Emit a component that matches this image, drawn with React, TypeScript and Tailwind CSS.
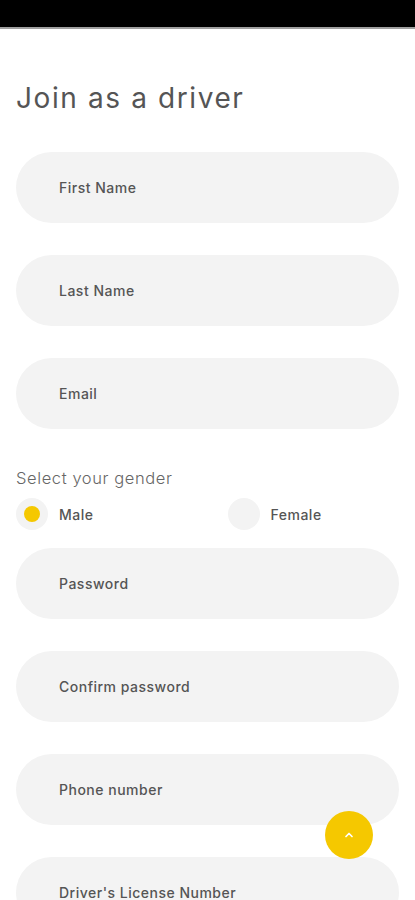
import React, { useState } from 'react'

const fields = ['First Name', 'Last Name', 'Email']
const moreFields = ['Password', 'Confirm password', 'Phone number', "Driver's License Number"]

const Field = ({ label, className = '' }: { label: string; className?: string }) => (
  <div className={`h-[71px] w-full rounded-full bg-[#f3f3f3] flex items-center pl-[43px] ${className}`}>
    <span className="text-[14px] font-medium tracking-[0.5px] text-[#555555]">{label}</span>
  </div>
)

const Radio = ({ label, checked, onClick }: { label: string; checked: boolean; onClick: () => void }) => (
  <button onClick={onClick} className="flex items-center gap-[11px] text-left">
    <span className="h-8 w-8 rounded-full bg-[#f3f3f3] flex items-center justify-center">
      {checked && <span className="h-4 w-4 rounded-full bg-[#f5c800]" />}
    </span>
    <span className="text-[14px] font-medium tracking-[0.5px] text-[#555555]">{label}</span>
  </button>
)

export default function App() {
  const [gender, setGender] = useState('male')

  return (
    <div className="relative h-[900px] w-full overflow-hidden bg-white" style={{ fontFamily: 'Inter, "Noto Sans", sans-serif' }}>
      {/* status bar */}
      <div className="h-[29px] bg-black border-b-2 border-[#a0a0a0]" />

      <div className="px-4">
        <h1 className="mt-[49px] h-10 leading-10 text-[28px] font-normal text-[#555555] tracking-[1.6px]">
          Join as a driver
        </h1>

        <div className="mt-[34px] flex flex-col gap-[32px]">
          {fields.map((f) => (
            <Field key={f} label={f} />
          ))}
        </div>

        <p className="mt-[37px] h-6 leading-6 text-[16.5px] font-light tracking-[0.6px] text-[#666666]">Select your gender</p>

        <div className="mt-2 grid grid-cols-2 h-8">
          <Radio label="Male" checked={gender === 'male'} onClick={() => setGender('male')} />
          <div className="pl-[20px]">
            <Radio label="Female" checked={gender === 'female'} onClick={() => setGender('female')} />
          </div>
        </div>

        <div className="mt-[18px] flex flex-col gap-[32px]">
          {moreFields.map((f) => (
            <Field key={f} label={f} />
          ))}
        </div>
      </div>

      {/* scroll to top button */}
      <button className="absolute left-[325px] top-[811px] h-12 w-12 rounded-full bg-[#f5c800] flex items-center justify-center">
        <svg width="12" height="12" viewBox="0 0 24 24" fill="none" stroke="white" strokeWidth="3.5" strokeLinecap="round" strokeLinejoin="round">
          <polyline points="6 15 12 9 18 15" />
        </svg>
      </button>
    </div>
  )
}
